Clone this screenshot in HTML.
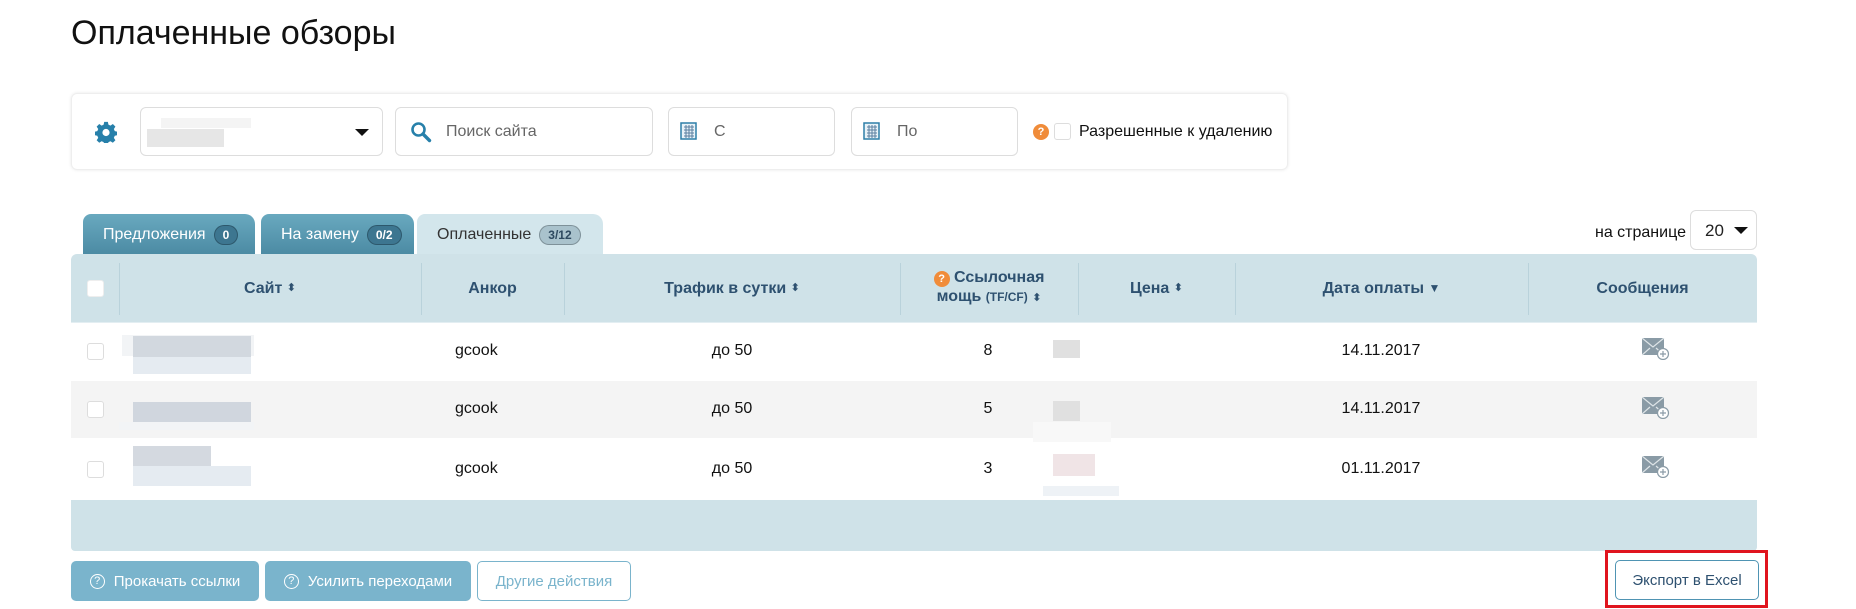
<!DOCTYPE html>
<html><head><meta charset="utf-8"><style>
*{box-sizing:border-box;margin:0;padding:0}
body{width:1856px;height:609px;background:#fff;font-family:"Liberation Sans","DejaVu Sans",sans-serif;position:relative;overflow:hidden;color:#222}
.a{position:absolute}
.inp{position:absolute;border:1px solid #ddd;border-radius:6px;background:#fff;top:107px;height:49px}
.ph{position:absolute;top:15px;font-size:16px;color:#666}
.hd{position:absolute;top:0;height:68px;display:flex;align-items:center;justify-content:center;font-weight:bold;color:#2e5170;font-size:16px;text-align:center;line-height:19px}
.vl{position:absolute;top:9px;height:52px;width:1px;background:#b9d2db}
.cb{position:absolute;width:17px;height:17px;border:1px solid #ddd;border-radius:3px;background:#fff}
.cell{position:absolute;font-size:16px;color:#111;transform:translateX(-50%)}
.blur{position:absolute;background:#dde1e6}
.btn{position:absolute;top:561px;height:40px;border-radius:5px;background:#7ab4cc;color:#fff;font-size:15px;display:flex;align-items:center;justify-content:center}
.q{display:inline-block;width:15px;height:15px;border:1.5px solid #fff;border-radius:50%;font-size:11px;line-height:12px;text-align:center;margin-right:9px}
.tab{position:absolute;top:214px;height:41px;font-size:16px;display:flex;align-items:center;padding-left:20px}
.bdg{display:inline-block;border-radius:11px;padding:2px 8px;font-size:12px;font-weight:bold;margin-left:8px;border:1px solid rgba(0,0,0,.25)}
.env{position:absolute;width:28px;height:22px}
</style></head><body>
<div class="a" style="left:71px;top:14px;font-size:34px;color:#111">Оплаченные обзоры</div>

<div class="a" style="left:71px;top:93px;width:1217px;height:77px;border:1px solid #eee;border-radius:6px;box-shadow:0 0 3px #e8e8e8"></div>
<svg class="a" style="left:95px;top:121px" width="22" height="22" viewBox="0 0 22 22"><path fill="#2780aa" d="M9 1h4l.6 3 2.2 1 2.6-1.7 2.8 2.8L19.5 8.7l1 2.3 2.5.5v4l-2.5.5-1 2.3 1.7 2.6-2.8 2.8-2.6-1.7-2.2 1-.6 2.5h-4l-.6-2.5-2.2-1-2.6 1.7-2.8-2.8 1.7-2.6-1-2.3L-1 15.5v-4l2.5-.5 1-2.3L.8 6.1l2.8-2.8 2.6 1.7 2.2-1z" transform="scale(.92) translate(1,0)"/><circle cx="11" cy="11.5" r="3.6" fill="#fff"/></svg>
<div class="inp" style="left:140px;width:243px"><div class="blur" style="left:20px;top:10px;width:90px;height:10px;background:#f4f4f4"></div><div class="blur" style="left:6px;top:21px;width:77px;height:18px;background:#e6e6e6"></div><div class="a" style="left:214px;top:21px;border-left:7px solid transparent;border-right:7px solid transparent;border-top:7px solid #111"></div></div>
<div class="inp" style="left:395px;width:258px"><svg class="a" style="left:14px;top:13px" width="22" height="22" viewBox="0 0 22 22"><circle cx="8.5" cy="8.5" r="6" fill="none" stroke="#2780aa" stroke-width="2.6"/><path d="M13 13l6.5 6.5" stroke="#2780aa" stroke-width="3.4" stroke-linecap="round"/></svg><div class="ph" style="left:50px">Поиск сайта</div></div>
<div class="inp" style="left:668px;width:167px"><svg class="a" style="left:11px;top:13px" width="18" height="20"><rect x="1" y="2" width="15" height="16" fill="#e8f2f8" stroke="#2e7fa8" stroke-width="1.5"/><path d="M4 6h10M4 9h10M4 12h10M4 15h10M6 4v13M9 4v13M12 4v13" stroke="#5a7fa0" stroke-width="1"/></svg><div class="ph" style="left:45px">С</div></div>
<div class="inp" style="left:851px;width:167px"><svg class="a" style="left:11px;top:13px" width="18" height="20"><rect x="1" y="2" width="15" height="16" fill="#e8f2f8" stroke="#2e7fa8" stroke-width="1.5"/><path d="M4 6h10M4 9h10M4 12h10M4 15h10M6 4v13M9 4v13M12 4v13" stroke="#5a7fa0" stroke-width="1"/></svg><div class="ph" style="left:45px">По</div></div>
<div class="a" style="left:1033px;top:124px;width:16px;height:16px;border-radius:50%;background:#f08c3a;color:#fff;font-size:11px;font-weight:bold;text-align:center;line-height:16px">?</div>
<div class="cb" style="left:1054px;top:123px"></div>
<div class="a" style="left:1079px;top:123px;font-size:16px;color:#111">Разрешенные к удалению</div>

<div class="tab" style="left:83px;width:172px;background:linear-gradient(#69a9bf,#4b8aa3);border-radius:8px 10px 0 0;color:#fff">Предложения<span class="bdg" style="background:#3d7690;color:#fff">0</span></div>
<div class="tab" style="left:261px;width:153px;background:linear-gradient(#69a9bf,#4b8aa3);border-radius:8px 10px 0 0;color:#fff">На замену<span class="bdg" style="background:#3d7690;color:#fff">0/2</span></div>
<div class="tab" style="left:417px;width:186px;background:#d3e6ec;border-radius:8px 10px 0 0;color:#333">Оплаченные<span class="bdg" style="background:#a9c2cc;color:#2e4a60">3/12</span></div>
<div class="a" style="left:1595px;top:224px;font-size:16px;color:#111">на странице</div>
<div class="a" style="left:1690px;top:210px;width:67px;height:40px;border:1px solid #ddd;border-radius:6px"><span class="a" style="left:14px;top:10px;font-size:17px">20</span><span class="a" style="left:43px;top:16px;border-left:7px solid transparent;border-right:7px solid transparent;border-top:7px solid #111"></span></div>

<div class="a" style="left:71px;top:254px;width:1686px;height:297px;background:#fff;border-radius:6px 6px 4px 4px;overflow:hidden">
 <div class="a" style="left:0;top:0;width:100%;height:68px;background:#cfe2e8"></div>
 <div class="cb" style="left:16px;top:26px;border-color:#eee"></div>
 <div class="vl" style="left:48px"></div>
 <div class="hd" style="left:48px;width:302px">Сайт&nbsp;<span style="font-size:11px">⬍</span></div>
 <div class="vl" style="left:350px"></div>
 <div class="hd" style="left:350px;width:143px">Анкор</div>
 <div class="vl" style="left:493px"></div>
 <div class="hd" style="left:493px;width:336px">Трафик в сутки&nbsp;<span style="font-size:11px">⬍</span></div>
 <div class="vl" style="left:829px"></div>
 <div class="hd" style="left:829px;width:178px"><div><span style="display:inline-block;width:16px;height:16px;border-radius:50%;background:#f08c3a;color:#fff;font-size:11px;line-height:16px">?</span> Ссылочная<br>мощь <span style="font-size:12px">(TF/CF)</span> <span style="font-size:11px">⬍</span></div></div>
 <div class="vl" style="left:1007px"></div>
 <div class="hd" style="left:1007px;width:157px">Цена&nbsp;<span style="font-size:11px">⬍</span></div>
 <div class="vl" style="left:1164px"></div>
 <div class="hd" style="left:1164px;width:293px">Дата оплаты&nbsp;<span style="font-size:12px">▼</span></div>
 <div class="vl" style="left:1457px"></div>
 <div class="hd" style="left:1457px;width:229px">Сообщения</div>
 <div class="a" style="left:0;top:68px;width:100%;height:1px;background:#e3eef2"></div>
 <div class="a" style="left:0;top:127px;width:100%;height:57px;background:#f4f4f4"></div>
 <div class="a" style="left:0;top:246px;width:100%;height:51px;background:#cfe2e8"></div>
 <div class="cb" style="left:16px;top:89px"></div><div class="cb" style="left:16px;top:147px"></div><div class="cb" style="left:16px;top:207px"></div>
 <div class="blur" style="left:51px;top:81px;width:132px;height:21px;background:#f2f4f6"></div><div class="blur" style="left:62px;top:82px;width:118px;height:21px;background:#d2d8df"></div><div class="blur" style="left:62px;top:103px;width:118px;height:17px;background:#e5ebf1"></div>
 <div class="blur" style="left:62px;top:148px;width:118px;height:20px;background:#d0d6de"></div><div class="blur" style="left:48px;top:168px;width:135px;height:8px;background:#f2f4f6"></div>
 <div class="blur" style="left:62px;top:192px;width:78px;height:20px;background:#d4d9e0"></div><div class="blur" style="left:62px;top:212px;width:118px;height:20px;background:#e5ebf1"></div>
 <div class="cell" style="left:384px;top:88px;transform:none">gcook</div><div class="cell" style="left:384px;top:146px;transform:none">gcook</div><div class="cell" style="left:384px;top:206px;transform:none">gcook</div>
 <div class="cell" style="left:661px;top:88px">до 50</div><div class="cell" style="left:661px;top:146px">до 50</div><div class="cell" style="left:661px;top:206px">до 50</div>
 <div class="cell" style="left:917px;top:88px">8</div><div class="cell" style="left:917px;top:146px">5</div><div class="cell" style="left:917px;top:206px">3</div>
 <div class="blur" style="left:982px;top:86px;width:27px;height:18px;background:#e0e0e0"></div>
 <div class="blur" style="left:982px;top:147px;width:27px;height:20px;background:#e0e0e0"></div><div class="blur" style="left:962px;top:168px;width:78px;height:20px;background:#f8f8f8"></div>
 <div class="blur" style="left:982px;top:200px;width:42px;height:22px;background:#f0e4e6"></div><div class="blur" style="left:972px;top:232px;width:76px;height:10px;background:#eef2f6"></div>
 <div class="cell" style="left:1310px;top:88px">14.11.2017</div><div class="cell" style="left:1310px;top:146px">14.11.2017</div><div class="cell" style="left:1310px;top:206px">01.11.2017</div>
 <svg class="env" style="left:1571px;top:84px" viewBox="0 0 28 22"><rect x="0" y="0" width="22" height="17" fill="#8a9ba6"/><path d="M0 0l11 9 11-9M0 17l8-7M22 17l-8-7" stroke="#dfe5e8" stroke-width="1.2" fill="none"/><circle cx="21" cy="16" r="5.5" fill="#fff" stroke="#8a9ba6" stroke-width="1.2"/><path d="M21 13v6M18 16h6" stroke="#8a9ba6" stroke-width="1.2"/></svg>
 <svg class="env" style="left:1571px;top:143px" viewBox="0 0 28 22"><rect x="0" y="0" width="22" height="17" fill="#8a9ba6"/><path d="M0 0l11 9 11-9M0 17l8-7M22 17l-8-7" stroke="#dfe5e8" stroke-width="1.2" fill="none"/><circle cx="21" cy="16" r="5.5" fill="#fff" stroke="#8a9ba6" stroke-width="1.2"/><path d="M21 13v6M18 16h6" stroke="#8a9ba6" stroke-width="1.2"/></svg>
 <svg class="env" style="left:1571px;top:202px" viewBox="0 0 28 22"><rect x="0" y="0" width="22" height="17" fill="#8a9ba6"/><path d="M0 0l11 9 11-9M0 17l8-7M22 17l-8-7" stroke="#dfe5e8" stroke-width="1.2" fill="none"/><circle cx="21" cy="16" r="5.5" fill="#fff" stroke="#8a9ba6" stroke-width="1.2"/><path d="M21 13v6M18 16h6" stroke="#8a9ba6" stroke-width="1.2"/></svg>
</div>

<div class="btn" style="left:71px;width:188px"><span class="q">?</span>Прокачать ссылки</div>
<div class="btn" style="left:265px;width:206px"><span class="q">?</span>Усилить переходами</div>
<div class="btn" style="left:477px;width:154px;background:#fff;border:1px solid #7ab4cc;color:#7ab4cc">Другие действия</div>

<div class="a" style="left:1605px;top:550px;width:163px;height:58px;border:3px solid #e0141e"></div>
<div class="a" style="left:1615px;top:560px;width:144px;height:40px;border:1px solid #4f94b3;border-radius:5px;color:#2e5170;font-size:15px;display:flex;align-items:center;justify-content:center">Экспорт в Excel</div>
</body></html>
